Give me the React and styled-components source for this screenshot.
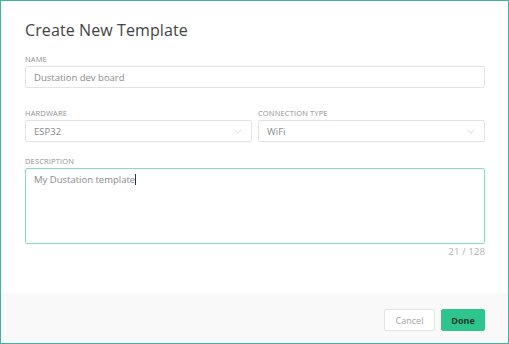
import React from "react";
import styled, { createGlobalStyle } from "styled-components";

const Global = createGlobalStyle`
  html, body { margin: 0; padding: 0; background: #fff; }
  body { font-family: "Open Sans", "Liberation Sans", sans-serif; }
  * { box-sizing: border-box; }
`;

const Frame = styled.div`
  width: 509px;
  height: 344px;
  border: 1px solid #45b0a2;
  display: flex;
  flex-direction: column;
  background: #fff;
  overflow: hidden;
`;

const Body = styled.div`
  flex: 1;
  padding: 18px 23px 0 24px;
  display: flex;
  flex-direction: column;
`;

const Title = styled.h1`
  margin: 0 0 14px;
  font-family: "Open Sans", "Liberation Sans", sans-serif;
  font-weight: 500;
  font-size: 16px;
  line-height: 22px;
  color: #444;
  letter-spacing: 0.1px;
`;

const Field = styled.div`
  display: flex;
  flex-direction: column;
  margin-bottom: ${(p) => p.$mb || 0}px;
  min-width: 0;
`;

const Label = styled.label`
  font-size: 7.5px;
  line-height: 9px;
  text-transform: uppercase;
  color: #8f8f8f;
  margin-bottom: 2px;
  letter-spacing: 0.15px;
`;

const Input = styled.div`
  height: 22px;
  border: 1px solid #e3e3e3;
  border-radius: 2px;
  padding: 0 8px;
  display: flex;
  align-items: center;
  justify-content: space-between;
  font-size: 9.5px;
  color: #8a8a8a;
`;

const Row = styled.div`
  display: grid;
  grid-template-columns: 1fr 1fr;
  gap: 6px;
`;

const Chevron = () => (
  <svg width="8" height="5" viewBox="0 0 8 5" fill="none" style={{ marginRight: 1 }}>
    <path d="M0.5 0.7 L4 4.2 L7.5 0.7" stroke="#d2d2d2" strokeWidth="0.8" />
  </svg>
);

const TextArea = styled.div`
  height: 76px;
  border: 1px solid #7fdfc2;
  border-radius: 2px;
  padding: 5px 8px;
  font-size: 9.5px;
  line-height: 12px;
  color: #8a8a8a;
`;

const Caret = styled.span`
  display: inline-block;
  width: 1px;
  height: 11px;
  background: #333;
  vertical-align: -2px;
`;

const Counter = styled.div`
  align-self: flex-end;
  margin-top: 2px;
  font-size: 9.8px;
  line-height: 12px;
  color: #b5b5b5;
`;

const Footer = styled.div`
  height: 50px;
  background: #f9f9f9;
  display: flex;
  justify-content: flex-end;
  align-items: flex-start;
  padding: 16px 23px 0 0;
  gap: 6px;
`;

const Button = styled.button`
  height: 22px;
  padding: 0;
  width: ${(p) => p.$w}px;
  border-radius: 2px;
  font-family: "Open Sans", "Liberation Sans", sans-serif;
  font-size: 9px;
  cursor: pointer;
  border: 1px solid ${(p) => (p.$primary ? "#2ec48d" : "#e3e3e3")};
  background: ${(p) => (p.$primary ? "#2ec48d" : "#fff")};
  color: ${(p) => (p.$primary ? "#163a2c" : "#a3a3a3")};
  font-weight: ${(p) => (p.$primary ? 700 : 400)};
`;

export default function App() {
  return (
    <>
      <Global />
      <Frame>
        <Body>
          <Title>Create New Template</Title>
          <Field $mb={21}>
            <Label>Name</Label>
            <Input>Dustation dev board</Input>
          </Field>
          <Row>
            <Field $mb={15}>
              <Label>Hardware</Label>
              <Input>
                ESP32
                <Chevron />
              </Input>
            </Field>
            <Field $mb={15}>
              <Label>Connection Type</Label>
              <Input>
                WiFi
                <Chevron />
              </Input>
            </Field>
          </Row>
          <Field>
            <Label>Description</Label>
            <TextArea>
              My Dustation template
              <Caret />
            </TextArea>
            <Counter>21 / 128</Counter>
          </Field>
        </Body>
        <Footer>
          <Button $w={51}>Cancel</Button>
          <Button $w={44} $primary>
            Done
          </Button>
        </Footer>
      </Frame>
    </>
  );
}
